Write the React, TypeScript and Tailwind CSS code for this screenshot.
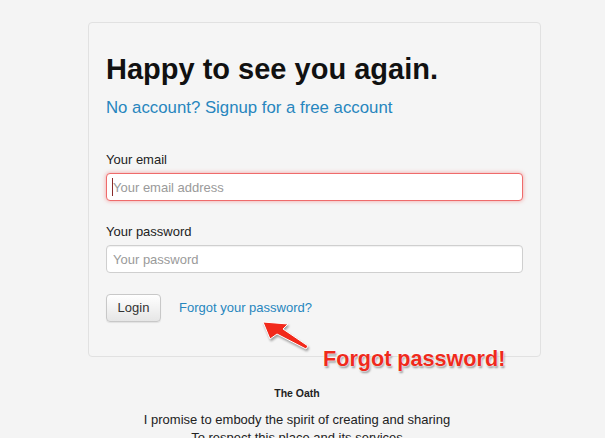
import React from 'react';

function ArrowMark() {
  return (
    <svg
      className="absolute left-[255px] top-[315px] drop-shadow-[1px_2px_1px_rgba(0,0,0,0.35)]"
      width="60"
      height="40"
      viewBox="0 0 60 40"
    >
      <polygon
        points="8,7 33,9 28,14 53,31 51,34 22,19 15,24"
        fill="#f2291b"
        stroke="#ffffff"
        strokeWidth="1"
        strokeLinejoin="round"
      />
    </svg>
  );
}

export default function App() {
  return (
    <div className="relative min-h-[438px] w-[605px] overflow-hidden bg-[#f4f4f4] font-['Liberation_Sans',Arial,sans-serif]">
      <div className="pt-[22px]">
        <div className="ml-[88px] w-[453px] rounded-[4px] border border-[#e1e1e1] bg-[#f5f5f5] px-[17px] pt-[29px] pb-[34px]">
          <h1 className="text-[29px] leading-[34px] font-bold text-[#111]">Happy to see you again.</h1>
          <a className="mt-[12px] block text-[16.8px] leading-[20px] text-[#2786be]">
            No account? Signup for a free account
          </a>

          <label className="mt-[33px] mb-[4px] block text-[13px] leading-[18px] text-[#222]">Your email</label>
          <div className="relative">
            <input
              className="block h-[28px] w-[417px] rounded-[4px] border border-[#ef6b6b] bg-white px-[6px] text-[13px] text-[#555] shadow-[0_0_4px_rgba(240,90,90,0.55)] outline-none placeholder:text-[#9a9a9a]"
              placeholder="Your email address"
            />
            <span className="absolute left-[6px] top-[5px] h-[18px] w-px bg-[#8a2a2a]" />
          </div>

          <label className="mt-[22px] mb-[4px] block text-[13px] leading-[18px] text-[#222]">Your password</label>
          <input
            type="password"
            className="block h-[28px] w-[417px] rounded-[4px] border border-[#cfcfcf] bg-white px-[6px] text-[13px] text-[#555] shadow-[inset_0_1px_1px_rgba(0,0,0,0.06)] outline-none placeholder:text-[#9a9a9a]"
            placeholder="Your password"
          />

          <div className="mt-[21px] flex items-center gap-[18px]">
            <button className="h-[28px] w-[55px] rounded-[4px] border border-[#c8c8c8] bg-gradient-to-b from-white to-[#e6e6e6] text-[13px] text-[#333] shadow-[0_1px_1px_rgba(0,0,0,0.08)]">
              Login
            </button>
            <a className="text-[13px] leading-[18px] text-[#2786be]">Forgot your password?</a>
          </div>
        </div>

        <div className="w-[594px] text-center text-[#222]">
          <div className="mt-[29px] text-[10.5px] leading-[14px] font-bold">The Oath</div>
          <p className="mt-[11px] text-[13px] leading-[18px]">
            I promise to embody the spirit of creating and sharing
            <br />
            To respect this place and its services
          </p>
        </div>
      </div>

      <ArrowMark />
      <div className="absolute left-[323px] top-[346px] text-[21.6px] leading-[26px] font-bold text-[#ef2a1c] [text-shadow:0_0_2px_#fff,0_0_2px_#fff,1px_2px_2px_rgba(0,0,0,0.4)]">
        Forgot password!
      </div>
    </div>
  );
}
